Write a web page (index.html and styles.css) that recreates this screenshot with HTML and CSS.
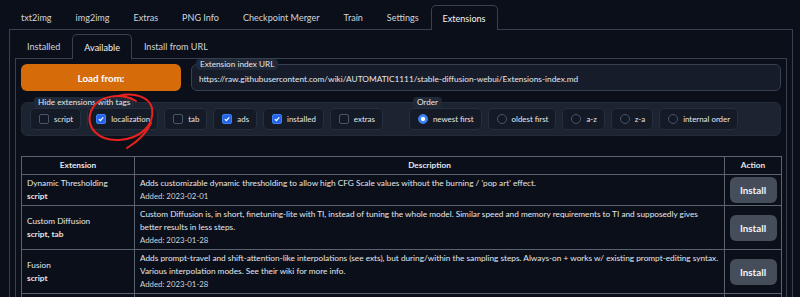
FILE: index.html
```html
<!DOCTYPE html>
<html>
<head>
<meta charset="utf-8">
<link rel="stylesheet" href="styles.css">
</head>
<body>
<div class="page">
  <div class="tabnav">
    <span class="tab">txt2img</span>
    <span class="tab">img2img</span>
    <span class="tab">Extras</span>
    <span class="tab">PNG Info</span>
    <span class="tab">Checkpoint Merger</span>
    <span class="tab">Train</span>
    <span class="tab">Settings</span>
    <span class="tab active">Extensions</span>
  </div>
  <div class="outer">
    <div class="tabnav sub">
      <span class="tab">Installed</span>
      <span class="tab active">Available</span>
      <span class="tab">Install from URL</span>
    </div>
    <div class="inner">
      <div class="loadrow">
        <button class="loadbtn">Load from:</button>
        <div class="urlbox">
          <span class="badge">Extension index URL</span>
          <span class="urltext">https://raw.githubusercontent.com/wiki/AUTOMATIC1111/stable-diffusion-webui/Extensions-index.md</span>
        </div>
      </div>
      <div class="groups">
        <div class="group hide">
          <span class="badge">Hide extensions with tags</span>
          <label class="opt"><span class="cb"></span>script</label>
          <label class="opt"><span class="cb on"><svg viewBox="0 0 10 10"><path d="M2.3 5.2 L4.2 7 L7.8 3" /></svg></span>localization</label>
          <label class="opt"><span class="cb"></span>tab</label>
          <label class="opt"><span class="cb on"><svg viewBox="0 0 10 10"><path d="M2.3 5.2 L4.2 7 L7.8 3" /></svg></span>ads</label>
          <label class="opt"><span class="cb on"><svg viewBox="0 0 10 10"><path d="M2.3 5.2 L4.2 7 L7.8 3" /></svg></span>installed</label>
          <label class="opt"><span class="cb"></span>extras</label>
        </div>
        <div class="group order">
          <span class="badge">Order</span>
          <label class="opt"><span class="rd on"></span>newest first</label>
          <label class="opt"><span class="rd"></span>oldest first</label>
          <label class="opt"><span class="rd"></span>a-z</label>
          <label class="opt"><span class="rd"></span>z-a</label>
          <label class="opt"><span class="rd"></span>internal order</label>
        </div>
      </div>
      <table class="ext">
        <colgroup><col class="c1"><col class="c2"><col class="c3"></colgroup>
        <thead>
          <tr><th>Extension</th><th>Description</th><th>Action</th></tr>
        </thead>
        <tbody>
          <tr>
            <td class="name">Dynamic Thresholding<br><b>script</b></td>
            <td class="desc">Adds customizable dynamic thresholding to allow high CFG Scale values without the burning / 'pop art' effect.<div class="added">Added: 2023-02-01</div></td>
            <td class="act"><button class="inst">Install</button></td>
          </tr>
          <tr>
            <td class="name">Custom Diffusion<br><b>script, tab</b></td>
            <td class="desc">Custom Diffusion is, in short, finetuning-lite with TI, instead of tuning the whole model. Similar speed and memory requirements to TI and supposedly gives<br>better results in less steps.<div class="added">Added: 2023-01-28</div></td>
            <td class="act"><button class="inst">Install</button></td>
          </tr>
          <tr>
            <td class="name">Fusion<br><b>script</b></td>
            <td class="desc">Adds prompt-travel and shift-attention-like interpolations (see exts), but during/within the sampling steps. Always-on + works w/ existing prompt-editing syntax. Various interpolation modes. See their wiki for more info.<div class="added">Added: 2023-01-28</div></td>
            <td class="act"><button class="inst">Install</button></td>
          </tr>
          <tr class="last">
            <td class="name">&nbsp;</td>
            <td class="desc">&nbsp;</td>
            <td class="act"></td>
          </tr>
        </tbody>
      </table>
    </div>
  </div>
  <svg class="scribble" viewBox="0 0 800 297" width="800" height="297">
    <path d="M136 101 C122 93, 98 94, 91 111 C85 128, 99 141, 119 140 C140 139, 155 125, 152 108 C149 97, 135 92, 118 96" />
    <path d="M151 123 C146 134, 137 142, 127 148" />
  </svg>
</div>
</body>
</html>
```
FILE: styles.css
```css
* { box-sizing: border-box; }
html, body { margin: 0; padding: 0; background: #0b0f19; }
body {
  font-family: Lato, "Noto Sans", sans-serif;
  color: #e5e7eb;
  width: 800px;
  height: 297px;
  overflow: hidden;
}
.page {
  position: relative;
  height: 297px;
  padding: 5px 7px 0 9px;
}
.tabnav {
  display: flex;
  height: 24px;
  align-items: stretch;
  font-size: 9.05px;
}
.tab {
  display: flex;
  align-items: center;
  padding: 0 11px;
  color: #d1d5db;
  border: 1px solid transparent;
  border-bottom: none;
  border-radius: 5px 5px 0 0;
  white-space: nowrap;
}
.tab.active {
  border-color: #374151;
  color: #f3f4f6;
  background: #0b0f19;
  position: relative;
  top: 1px;
  margin-top: -1px;
}
.outer {
  border: 1px solid #374151;
  border-bottom: none;
  height: 268px;
  padding: 4px 5px 0 5px;
}
.inner {
  border: 1px solid #374151;
  border-bottom: none;
  padding: 5px 5px 0 5px;
  height: 239px;
  overflow: hidden;
}
.loadrow {
  display: flex;
  gap: 10px;
  height: 27px;
}
.loadbtn {
  width: 160px;
  border: none;
  border-radius: 6px;
  background: #d66b0a;
  color: #fff;
  font-family: inherit;
  font-weight: 700;
  font-size: 9.8px;
}
.urlbox {
  flex: 1;
  position: relative;
  border: 1px solid #374151;
  border-radius: 6px;
  background: #161c29;
  display: flex;
  align-items: center;
  padding: 3px 0 0 7px;
  font-size: 8.3px;
  color: #e5e7eb;
}
.badge {
  position: absolute;
  left: 4px;
  top: -6px;
  font-size: 8.2px;
  line-height: 11px;
  padding: 0 4px;
  background: #1f2937;
  border-radius: 4px;
  color: #e5e7eb;
  white-space: nowrap;
}
.groups {
  margin-top: 11px;
  height: 34px;
  display: flex;
  padding-left: 8px;
  background: #1c2331;
  border-radius: 6px;
  border: 1px solid #232b3a;
}
.group {
  position: relative;
  display: flex;
  align-items: center;
  gap: 6px;
}
.group .badge { left: 4px; top: -6px; }
.group.order { margin-left: 26px; }
.opt {
  display: flex;
  align-items: center;
  height: 22px;
  padding: 0 7px 0 8px;
  background: #141a26;
  border: 1px solid #262f3f;
  border-radius: 5px;
  font-size: 7.9px;
  color: #e5e7eb;
  white-space: nowrap;
  gap: 5px;
}
.cb {
  width: 10px;
  height: 10px;
  border-radius: 2px;
  border: 1px solid #4b5563;
  background: #111827;
  display: flex;
}
.cb.on {
  background: #2563eb;
  border-color: #3b82f6;
}
.cb svg { width: 100%; height: 100%; }
.cb path { fill: none; stroke: #fff; stroke-width: 1.6; }
.rd {
  width: 10px;
  height: 10px;
  border-radius: 50%;
  border: 1px solid #4b5563;
  background: #111827;
}
.rd.on {
  border-color: #3b82f6;
  background: radial-gradient(circle, #ffffff 0 1.8px, #3b82f6 2.4px);
}
.ext {
  margin-top: 20px;
  width: 761px;
  border-collapse: collapse;
  table-layout: fixed;
  font-size: 8.25px;
  line-height: 13px;
  color: #e5e7eb;
}
.c1 { width: 113px; }
.c3 { width: 57px; }
.ext th, .ext td {
  border: 1px solid #5b6270;
}
.ext th {
  height: 18px;
  font-weight: 700;
  text-align: center;
  padding: 0;
}
.ext td { padding: 2px 5px; vertical-align: middle; }
.ext td.desc { vertical-align: top; padding-right: 1px; }
.added { font-size: 7.8px; color: #d1d5db; }
.ext td.act { padding: 2px 4px; text-align: center; }
.ext tr.last td { height: 30px; }
.inst {
  width: 47px;
  height: 26px;
  border: none;
  border-radius: 6px;
  background: #454c5a;
  color: #f3f4f6;
  font-family: inherit;
  font-weight: 700;
  font-size: 9.8px;
}
.scribble {
  position: absolute;
  left: 0;
  top: 0;
  pointer-events: none;
}
.scribble path {
  fill: none;
  stroke: #e8221c;
  stroke-width: 2;
  stroke-linecap: round;
}
```
